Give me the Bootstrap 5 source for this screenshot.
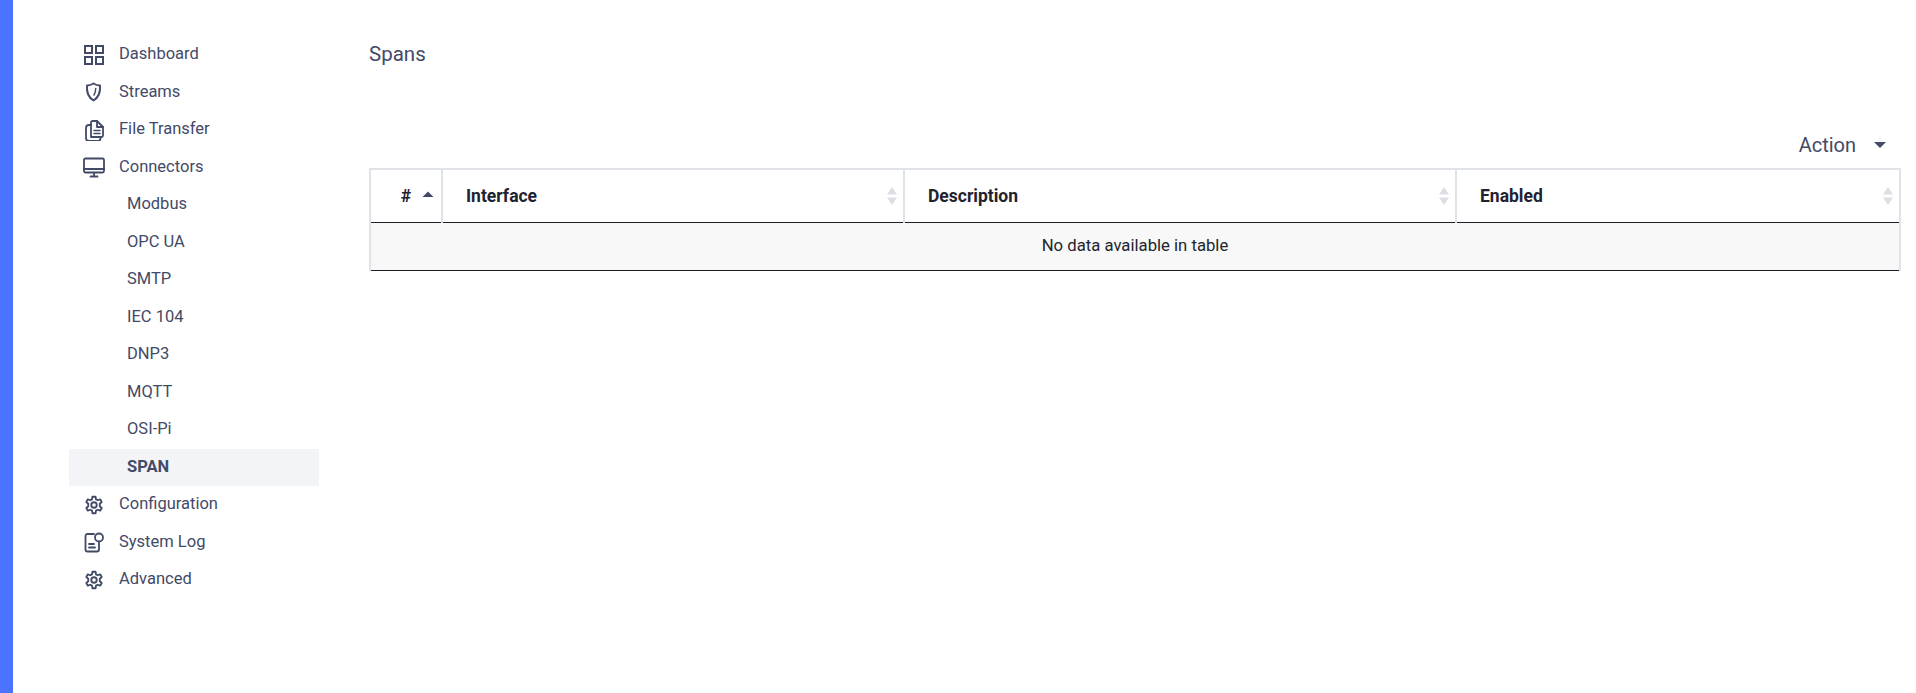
<!DOCTYPE html>
<html lang="en">
<head>
  <meta charset="UTF-8">
  <meta name="viewport" content="width=device-width, initial-scale=1.0">
  <title>Spans</title>
  <link href="https://cdn.jsdelivr.net/npm/bootstrap@5.3.0/dist/css/bootstrap.min.css" rel="stylesheet">
  <style>
    html, body { height: 100%; }
    body {
      font-family: Roboto, "Liberation Sans", sans-serif;
      font-size: 16.5px;
      color: #434a67;
      background: #fff;
      overflow: hidden;
    }
    .app-wrap { min-height: 693px; }
    .blue-strip { width: 13px; background: #4a74ff; flex: none; }
    .side-menu { width: 250px; margin-left: 56px; padding-top: 36px; flex: none; }
    .menu-item {
      height: 37.5px;
      color: #434a67;
      text-decoration: none;
      padding-left: 14px;
    }
    .menu-item svg { width: 22px; height: 22px; flex: none; margin-right: 14px; }
    .menu-sub { padding-left: 58px; }
    .menu-active { background: #f3f4f8; font-weight: 700; }
    .main-area { margin-left: 50px; width: 1530px; padding-top: 42px; flex: none; }
    .page-title { font-size: 20.5px; font-weight: 400; line-height: 24px; margin: 0; }
    .action-row { height: 75px; margin-top: 27px; padding-right: 13px; }
    .action-btn { font-size: 20px; color: #434a67; line-height: 24px; height: 26px; margin-top: 39px; }
    .action-caret {
      width: 0; height: 0; margin-left: 18px;
      border-left: 6.5px solid transparent;
      border-right: 6.5px solid transparent;
      border-top: 6.5px solid #434a67;
    }
    .span-table { width: 1530px; table-layout: fixed; border-collapse: collapse; margin: 0; color: #1f2230; }
    .col-num { width: 72px; }
    .col-iface { width: 462px; }
    .col-desc { width: 552px; }
    .col-enabled { width: 444px; }
    .span-table th {
      position: relative;
      height: 53px;
      padding: 0 23px;
      font-size: 17.5px;
      font-weight: 700;
      color: #1f2230;
      vertical-align: middle;
      border: 2px solid #dfe3e8;
      border-bottom: 1px solid #1c1e26;
    }
    .span-table th.num-head { padding-right: 30px; }
    .span-table td {
      height: 48px;
      text-align: center;
      background: #f8f8f8;
      color: #22252f;
      vertical-align: middle;
      padding: 0;
      font-size: 16.7px;
      border-left: 2px solid #dfe3e8;
      border-right: 2px solid #dfe3e8;
      border-bottom: 1px solid #1c1e26;
    }
    .sort-mark {
      position: absolute;
      right: 5px;
      top: 50%;
      width: 12px;
      height: 20px;
      margin-top: -10px;
    }
    .num-head .sort-mark { right: 7px; }
  </style>
</head>
<body>
  <div class="d-flex app-wrap">
    <div class="blue-strip"></div>

    <nav class="side-menu d-flex flex-column">
      <a class="menu-item d-flex align-items-center" href="#">
        <svg viewBox="0 0 22 22" fill="none" stroke="currentColor" stroke-width="2"><rect x="2" y="2" width="7" height="7"/><rect x="13" y="2" width="7" height="7"/><rect x="2" y="13" width="7" height="7"/><rect x="13" y="13" width="7" height="7"/></svg>
        Dashboard
      </a>
      <a class="menu-item d-flex align-items-center" href="#">
        <svg viewBox="0 0 22 22" fill="none" stroke="currentColor" stroke-width="2" stroke-linejoin="round" stroke-linecap="round"><path d="M10.500 2.500c2 1.300 4.300 2 6.500 2 .5 6.500-1.500 12-6.500 15-5-3-7-8.500-6.500-15 2.200 0 4.500-.7 6.500-2z"/><path d="M12.700 7.500c0 2.500-.5 4.500-1.700 6.500" stroke-width="1.500"/></svg>
        Streams
      </a>
      <a class="menu-item d-flex align-items-center" href="#">
        <svg viewBox="0 0 22 22" fill="none" stroke="currentColor" stroke-width="1.800" stroke-linejoin="round" stroke-linecap="round"><path d="M8 18V3.500C8 2.700 8.700 2 9.500 2H14l6 6v8.500c0 .8-.7 1.500-1.500 1.500z"/><path d="M14 2v6h6"/><path d="M8 6H6C4.300 6 3 7.300 3 9v10c0 1.700 1.300 3 3 3h9c1.500 0 2.500-1 2.500-3"/><path d="M11 11.500h6M11 14.500h6" stroke-width="1.500"/></svg>
        File Transfer
      </a>
      <a class="menu-item d-flex align-items-center" href="#">
        <svg viewBox="0 0 22 22" fill="none" stroke="currentColor" stroke-width="1.800" stroke-linejoin="round" stroke-linecap="round"><rect x="1" y="2.500" width="20" height="14" rx="1.500"/><path d="M1 13h20M11 17v3M7.500 20.500h7"/></svg>
        Connectors
      </a>
      <a class="menu-item menu-sub d-flex align-items-center" href="#">Modbus</a>
      <a class="menu-item menu-sub d-flex align-items-center" href="#">OPC UA</a>
      <a class="menu-item menu-sub d-flex align-items-center" href="#">SMTP</a>
      <a class="menu-item menu-sub d-flex align-items-center" href="#">IEC 104</a>
      <a class="menu-item menu-sub d-flex align-items-center" href="#">DNP3</a>
      <a class="menu-item menu-sub d-flex align-items-center" href="#">MQTT</a>
      <a class="menu-item menu-sub d-flex align-items-center" href="#">OSI-Pi</a>
      <a class="menu-item menu-sub menu-active d-flex align-items-center" href="#">SPAN</a>
      <a class="menu-item d-flex align-items-center" href="#">
        <svg viewBox="0 0 24 24" fill="none" stroke="currentColor" stroke-width="2" stroke-linejoin="round"><circle cx="12" cy="12" r="3"/><path d="M10.300 3h3.400l.5 2.800 1.900 1 2.600-1 1.700 3-2.100 1.800v2.800l2.100 1.800-1.700 3-2.600-1-1.900 1-.5 2.800h-3.400l-.5-2.800-1.900-1-2.600 1-1.700-3 2.100-1.800v-2.800L3.600 8.800l1.700-3 2.600 1 1.900-1z"/></svg>
        Configuration
      </a>
      <a class="menu-item d-flex align-items-center" href="#">
        <svg viewBox="0 0 22 22" fill="none" stroke="currentColor" stroke-width="1.800" stroke-linejoin="round" stroke-linecap="round"><path d="M11 3H4.500C3.200 3 2.500 3.700 2.500 5v13.500c0 1.300.7 2 2 2H14c1.300 0 2-.7 2-2V15"/><circle cx="16" cy="6.500" r="4"/><path d="M16 10.500V14M6 13h5M6 16.500h6"/></svg>
        System Log
      </a>
      <a class="menu-item d-flex align-items-center" href="#">
        <svg viewBox="0 0 24 24" fill="none" stroke="currentColor" stroke-width="2" stroke-linejoin="round"><circle cx="12" cy="12" r="3"/><path d="M10.300 3h3.400l.5 2.800 1.900 1 2.600-1 1.700 3-2.100 1.800v2.800l2.100 1.800-1.700 3-2.600-1-1.900 1-.5 2.800h-3.400l-.5-2.800-1.900-1-2.600 1-1.700-3 2.100-1.800v-2.800L3.600 8.800l1.700-3 2.600 1 1.900-1z"/></svg>
        Advanced
      </a>
    </nav>

    <main class="main-area">
      <h1 class="page-title">Spans</h1>
      <div class="action-row d-flex justify-content-end align-items-start">
        <div class="action-btn d-flex align-items-center">Action<span class="action-caret"></span></div>
      </div>
      <table class="span-table">
        <colgroup>
          <col class="col-num"><col class="col-iface"><col class="col-desc"><col class="col-enabled">
        </colgroup>
        <thead>
          <tr>
            <th class="text-end num-head">#
              <svg class="sort-mark" viewBox="0 0 12 20"><path d="M6 5.500l5.500 5.500H.5z" fill="#434a67"/></svg>
            </th>
            <th>Interface
              <svg class="sort-mark" viewBox="0 0 12 20"><path d="M6 1l5 7.500H1zM6 19l-5-7.500h10z" fill="#dcdee3"/></svg>
            </th>
            <th>Description
              <svg class="sort-mark" viewBox="0 0 12 20"><path d="M6 1l5 7.500H1zM6 19l-5-7.500h10z" fill="#dcdee3"/></svg>
            </th>
            <th>Enabled
              <svg class="sort-mark" viewBox="0 0 12 20"><path d="M6 1l5 7.500H1zM6 19l-5-7.500h10z" fill="#dcdee3"/></svg>
            </th>
          </tr>
        </thead>
        <tbody>
          <tr><td colspan="4">No data available in table</td></tr>
        </tbody>
      </table>
    </main>
  </div>
  <script src="https://cdn.jsdelivr.net/npm/bootstrap@5.3.0/dist/js/bootstrap.bundle.min.js"></script>
</body>
</html>
